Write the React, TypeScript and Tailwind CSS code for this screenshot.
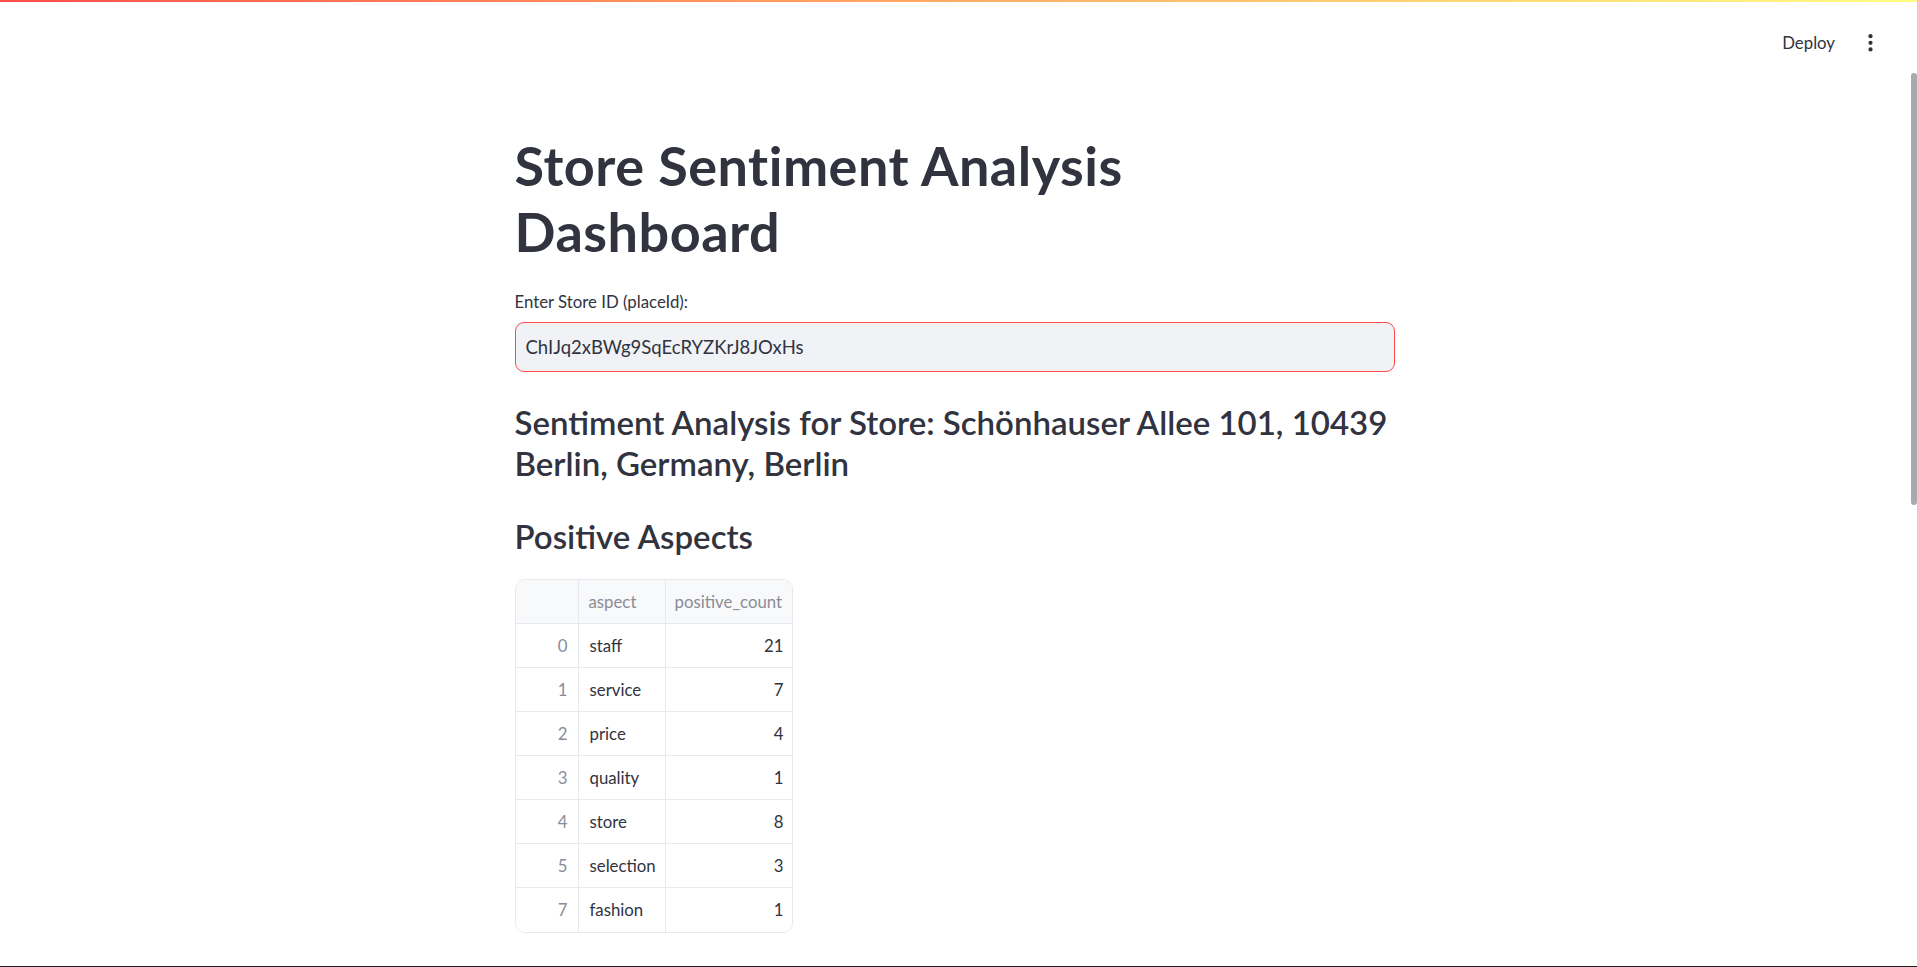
import React from "react";

const rows: [number, string, number][] = [
  [0, "staff", 21],
  [1, "service", 7],
  [2, "price", 4],
  [3, "quality", 1],
  [4, "store", 8],
  [5, "selection", 3],
  [7, "fashion", 1],
];

export default function App() {
  return (
    <div
      className="relative flex h-[967px] w-full flex-col overflow-hidden bg-white text-[#31333f]"
      style={{ fontFamily: "Lato, 'Noto Sans', sans-serif" }}
    >
      <div className="h-[2px] w-full bg-gradient-to-r from-[#ff4b4b] to-[#fffd80]" />
      <header className="flex h-[82px] items-center justify-end pr-[44px]">
        <span className="text-[16.8px] leading-[20px] text-[#31333f]">Deploy</span>
        <svg className="ml-[33px]" width="5" height="18" viewBox="0 0 5 18">
          <circle cx="2.5" cy="2.2" r="2.1" fill="#31333f" />
          <circle cx="2.5" cy="8.8" r="2.1" fill="#31333f" />
          <circle cx="2.5" cy="15.4" r="2.1" fill="#31333f" />
        </svg>
      </header>

      <main className="flex flex-1 justify-center pr-[8px]">
        <div className="w-[880px] pt-[49px]">
          <h1 className="text-[54px] font-bold leading-[66px] tracking-[0.5px]">
            Store Sentiment Analysis
            <br />
            Dashboard
          </h1>

          <label className="mt-[27px] block text-[16.8px] leading-[20px]">
            Enter Store ID (placeId):
          </label>
          <div className="mt-[10px] flex h-[50px] items-center rounded-[9px] border border-[#ff4b4b] bg-[#f0f2f6] px-[10px]">
            <span className="text-[18.5px] leading-[24px]">ChIJq2xBWg9SqEcRYZKrJ8JOxHs</span>
          </div>

          <h3 className="mt-[30px] whitespace-nowrap text-[33px] font-semibold leading-[41px]">
            Sentiment Analysis for Store: Schönhauser Allee 101, 10439
            <br />
            Berlin, Germany, Berlin
          </h3>

          <h3 className="mt-[32px] text-[33px] font-semibold leading-[41px]">Positive Aspects</h3>

          <div className="mt-[22px] w-[278px] overflow-hidden rounded-[10px] border border-[#e8e9ed] text-[16.8px]">
            <div className="grid grid-cols-[63px_87px_126px] bg-[#f8f9fb] text-[#8a8c97]">
              <div className="h-[44px] border-r border-b border-[#e8e9ed]" />
              <div className="flex h-[44px] items-center border-r border-b border-[#e8e9ed] px-[10px]">aspect</div>
              <div className="flex h-[44px] items-center border-b border-[#e8e9ed] px-[9px]">positive_count</div>
            </div>
            {rows.map(([idx, aspect, count], i) => (
              <div key={idx} className="grid grid-cols-[63px_87px_126px] bg-white">
                <div
                  className={`flex h-[44px] items-center justify-end border-r border-[#e8e9ed] pr-[10px] text-[#8a8c97] ${
                    i < rows.length - 1 ? "border-b" : ""
                  }`}
                >
                  {idx}
                </div>
                <div
                  className={`flex h-[44px] items-center border-r border-[#e8e9ed] px-[11px] ${
                    i < rows.length - 1 ? "border-b" : ""
                  }`}
                >
                  {aspect}
                </div>
                <div
                  className={`flex h-[44px] items-center justify-end border-[#e8e9ed] pr-[8px] ${
                    i < rows.length - 1 ? "border-b" : ""
                  }`}
                >
                  {count}
                </div>
              </div>
            ))}
          </div>
        </div>
      </main>

      <div className="absolute right-[0px] top-[73px] h-[432px] w-[6px] rounded-[3px] bg-[#a9a9ae]" />
      <div className="h-[1px] w-full bg-[#1b1b1b]" />
    </div>
  );
}
